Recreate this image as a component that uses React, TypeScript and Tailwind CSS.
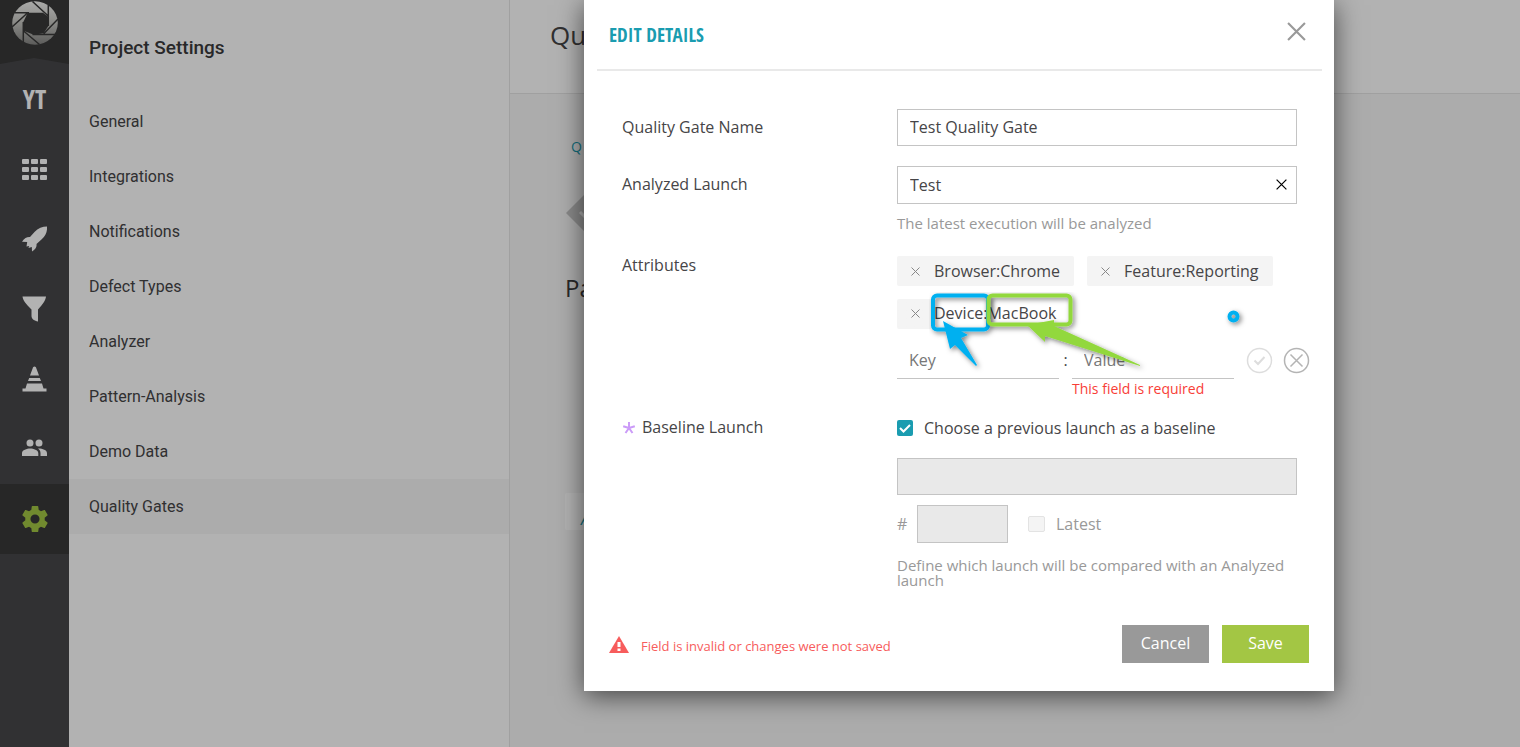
import React from "react";

const sideItems = [
  "General",
  "Integrations",
  "Notifications",
  "Defect Types",
  "Analyzer",
  "Pattern-Analysis",
  "Demo Data",
  "Quality Gates",
];

const icons: { name: string; drawing: React.ReactNode }[] = [
  {
    name: "Dashboards",
    drawing: (
      <g>
        {[3, 11, 19].map((y) =>
          [0, 9, 18].map((x) => (
            <rect key={`${x}-${y}`} x={x} y={y} width="7" height="5" rx="1" />
          )),
        )}
      </g>
    ),
  },
  {
    name: "Launches",
    drawing: (
      <path d="M25 .5C25.500 5.500 23.500 10 20 13L14.500 18C15 20.500 13.500 23.500 10 25.500L9.800 21L6.500 22L7.200 20L4.500 20.500L5.200 16L0 15.800C2.500 12 5 10.800 8 11L12.500 6C16 2.300 20.500.5 25 .5Z" />
    ),
  },
  { name: "Filters", drawing: <path d="M.5.5H24C23.500 4.500 21 8 16 13.500V25.500C12.500 25 9.500 23 9.500 20V13.500C4 8 1 4.500.5.5Z" /> },
  {
    name: "Debug",
    drawing: (
      <path d="M12.500 .5C13.500.5 14 1.300 14.300 2.200L17 9.500H8L10.700 2.200C11 1.300 11.500.5 12.500.5ZM7.200 12H17.800L19 15H6ZM5 17.500H20L21.500 22.500H24.500V25.500H.5V22.500H3.500Z" />
    ),
  },
  {
    name: "Members",
    drawing: (
      <path d="M8 3.500a3.500 3.500 0 1 1 0 7a3.500 3.500 0 0 1 0-7ZM17 3.500a3.500 3.500 0 1 1 0 7a3.500 3.500 0 0 1 0-7ZM0 20V17.200C0 14 5 12.500 8.200 12.500S16.300 14 16.300 17.200V20ZM16 12.600C20 12.400 25 14 25 17.200V20H18.500V17.200C18.500 15.200 17.600 13.700 16 12.600Z" />
    ),
  },
];

function Cross({ className, width = 1 }: { className: string; width?: number }) {
  return (
    <svg viewBox="0 0 18 18" className={className} fill="none" stroke="currentColor" strokeWidth={width} aria-hidden="true">
      <path d="M1 1L17 17M17 1L1 17" />
    </svg>
  );
}

function Logo() {
  return (
    <svg viewBox="0 0 46 46" className="size-[46px]" aria-hidden="true">
      <defs>
        <linearGradient id="steel" x1="0" y1="0" x2="0" y2="1">
          <stop offset="0" stopColor="#f4f4f2" />
          <stop offset=".5" stopColor="#c4c4c0" />
          <stop offset="1" stopColor="#858583" />
        </linearGradient>
      </defs>
      <ellipse cx="23" cy="23" rx="22.800" ry="21.700" fill="url(#steel)" />
      <path d="M15.700 12.700H31L36.300 16.700V26L31.700 33.300L21.700 34.700L11.700 30.700L11.300 22Z" fill="#383838" />
      <path
        d="M3 12.700H17M20.500 1.500L36.800 16.500M36.300 5V26M46 19L31.700 33.800M44 34.500H20.500M27.500 44.500L11.300 30.700M11.300 42V22M0 27L16 12.500"
        stroke="#383838"
        strokeWidth="1.500"
      />
    </svg>
  );
}

function Rail() {
  return (
    <nav aria-label="Main" className="flex w-[69px] shrink-0 flex-col bg-[#47474a]">
      <div className="flex h-16 flex-col items-center bg-[#383838]">
        <Logo />
        <svg viewBox="0 0 69 18" preserveAspectRatio="none" className="mt-auto h-[6px] w-full" aria-hidden="true">
          <path d="M0 18L34 0L69 18Z" fill="#47474a" />
        </svg>
      </div>
      <a href="#project" className="flex h-[70px] items-center justify-center font-['Open_Sans_Condensed','Open_Sans',sans-serif] text-[26px] font-bold text-white">
        YT
      </a>
      {icons.map((icon) => (
        <a key={icon.name} href={`#${icon.name}`} aria-label={icon.name} className="flex h-[70px] items-center justify-center">
          <svg viewBox="0 0 25 26" className="h-[26px] w-[25px] fill-white" aria-hidden="true">
            {icon.drawing}
          </svg>
        </a>
      ))}
      <a href="#settings" aria-label="Settings" className="flex h-[70px] items-center justify-center bg-[#383838]">
        <svg viewBox="2 2 20 20" className="size-[26px] fill-[#a3c644]" aria-hidden="true">
          <path d="M19.430 12.980c.04-.32.07-.64.07-.98s-.03-.66-.07-.98l2.110-1.650c.19-.15.24-.42.12-.64l-2-3.460c-.12-.22-.39-.3-.61-.22l-2.490 1c-.52-.4-1.080-.73-1.690-.98l-.38-2.650C14.460 2.180 14.250 2 14 2h-4c-.25 0-.46.18-.49.42l-.38 2.650c-.61.25-1.170.59-1.690.98l-2.490-1c-.23-.09-.49 0-.61.22l-2 3.460c-.13.22-.07.49.12.64l2.110 1.650c-.04.32-.07.65-.07.98s.03.66.07.98l-2.110 1.650c-.19.15-.24.42-.12.64l2 3.460c.12.22.39.3.61.22l2.490-1c.52.4 1.080.73 1.690.98l.38 2.650c.03.24.24.42.49.42h4c.25 0 .46-.18.49-.42l.38-2.650c.61-.25 1.170-.59 1.690-.98l2.490 1c.23.09.49 0 .61-.22l2-3.460c.12-.22.07-.49-.12-.64zM12 15.500A3.500 3.500 0 1 1 12 8.500a3.500 3.500 0 0 1 0 7z" />
        </svg>
      </a>
    </nav>
  );
}

function Chip({ children }: { children: React.ReactNode }) {
  return (
    <span className="flex h-[30px] items-center gap-3.5 rounded-xs bg-[#f4f4f4] px-3.5">
      <button type="button" aria-label="Remove" className="text-[#888]">
        <Cross className="size-[9px]" width={2} />
      </button>
      <span>{children}</span>
    </span>
  );
}

function Markers() {
  return (
    <svg viewBox="0 0 320 90" className="pointer-events-none absolute top-9 left-8 h-[90px] w-80" aria-hidden="true">
      <defs>
        <filter id="drop" filterUnits="userSpaceOnUse" x="-20" y="-20" width="360" height="130">
          <feDropShadow dx="2" dy="2" stdDeviation="2.500" floodOpacity=".5" />
        </filter>
      </defs>
      <g filter="url(#drop)">
        <rect x="4" y="3.500" width="55" height="34" rx="4" fill="none" stroke="#00b0f0" strokeWidth="4" />
        <path d="M14 29L39 43L32 46L48 73L47 74L26 53L21 57Z" fill="#00b0f0" />
      </g>
      <g filter="url(#drop)">
        <rect x="59.500" y="3.500" width="82" height="29" rx="4" fill="none" stroke="#92d83e" strokeWidth="4" />
        <path d="M98 33L125 28V34L211 73V74L116 44V50Z" fill="#92d83e" />
      </g>
      <circle cx="304.500" cy="24.500" r="4" fill="none" stroke="#00b0f0" strokeWidth="4" filter="url(#drop)" />
    </svg>
  );
}

const label = "w-[275px] shrink-0 leading-9";
const box = "block w-full border border-[#c4c4c4] px-3 text-base text-[#464547]";

function Modal() {
  return (
    <form role="dialog" aria-label="Edit details" className="w-[750px] bg-white px-[13px] pb-7 font-['Open_Sans',sans-serif] text-base text-[#464547] shadow-[0_5px_25px_rgba(0,0,0,0.6)]">
      <header className="-mr-px flex h-[71px] items-center justify-between border-b-2 border-[#e9e9e9] pr-4 pl-3">
        <h2 className="font-['Open_Sans_Condensed','Open_Sans',sans-serif] text-[19px] leading-6 font-bold text-[#1a9cb0] uppercase">Edit details</h2>
        <button type="button" aria-label="Close" className="pb-1.5 text-[#999]">
          <Cross className="size-[19px]" width={2} />
        </button>
      </header>
      <div className="flex flex-col pt-[38px] pr-6 pl-[25px]">
        <div className="flex">
          <label htmlFor="gate" className={label}>Quality Gate Name</label>
          <input id="gate" defaultValue="Test Quality Gate" className={`${box} h-[37px] pb-0.5`} />
        </div>
        <div className="mt-5 flex">
          <label htmlFor="launch" className={label}>Analyzed Launch</label>
          <div className="flex-1">
            <div className="relative">
              <input id="launch" defaultValue="Test" className={`${box} h-[38px]`} />
              <button type="button" aria-label="Clear" className="absolute top-[13px] right-2.5 text-black">
                <Cross className="size-[11px]" width={2} />
              </button>
            </div>
            <p className="mt-2 text-[15px] leading-[22px] text-[#999]">The latest execution will be analyzed</p>
          </div>
        </div>
        <div className="mt-[22px] flex">
          <span className="w-[275px] shrink-0 leading-[18px]">Attributes</span>
          <div className="relative flex-1">
            <div className="flex flex-wrap gap-[13px]">
              <Chip>Browser:Chrome</Chip>
              <Chip>Feature:Reporting</Chip>
              <span className="flex h-[30px] items-center rounded-xs bg-linear-to-r from-[#f4f4f4] from-[34px] to-white to-[34px] px-3.5 pb-0.5">
                <button type="button" aria-label="Remove" className="mr-3.5 text-[#888]">
                  <Cross className="size-[9px]" width={2} />
                </button>
                Device:MacBook
              </span>
            </div>
            <div className="mt-3 -mr-3 flex h-[38px] items-center">
              <input aria-label="Key" placeholder="Key" className="h-full w-[162px] border-b border-[#c4c4c4] px-3 placeholder:text-[#777]" />
              <span className="w-[13px] text-center">:</span>
              <input aria-label="Value" placeholder="Value" className="h-full w-[162px] border-b border-[#c4c4c4] px-3 placeholder:text-[#777]" />
              <button type="button" aria-label="Apply" className="ml-3 text-[#ddd]">
                <svg viewBox="0 0 27 27" className="size-[27px]" fill="none" stroke="currentColor" aria-hidden="true">
                  <circle cx="13.500" cy="13.500" r="12" strokeWidth="1.500" />
                  <path d="M8.500 13.500L12 17L18.500 10" strokeWidth="2" />
                </svg>
              </button>
              <button type="button" aria-label="Discard" className="ml-2.5 text-[#b4b4b4]">
                <svg viewBox="0 0 27 27" className="size-[27px]" fill="none" stroke="currentColor" strokeWidth="1.500" aria-hidden="true">
                  <circle cx="13.500" cy="13.500" r="12" />
                  <path d="M7.500 7.500L19.500 19.500M19.500 7.500L7.500 19.500" />
                </svg>
              </button>
            </div>
            <p className="ml-[175px] text-sm leading-5 text-[#f83e37]">This field is required</p>
            <Markers />
          </div>
        </div>
        <div className="mt-[18px] flex">
          <span className="flex w-[275px] shrink-0 gap-1.5 leading-5">
            <svg viewBox="0 0 14 14" className="mt-1 size-3.5" stroke="#cb9bf8" strokeWidth="2" aria-hidden="true">
              <path d="M7 7V1M7 7L1.200 5.200M7 7L12.800 5.200M7 7L3.500 12M7 7L10.500 12" />
            </svg>
            Baseline Launch
          </span>
          <div className="flex-1">
            <label className="flex items-center gap-[11px] leading-[22px]">
              <span className="relative flex size-4">
                <input type="checkbox" defaultChecked className="size-4 appearance-none rounded-xs bg-[#1a9cb0]" />
                <svg viewBox="0 0 16 16" className="pointer-events-none absolute inset-0 size-4" fill="none" stroke="white" strokeWidth="2" aria-hidden="true">
                  <path d="M3 8L6.500 11.500L13 5" />
                </svg>
              </span>
              Choose a previous launch as a baseline
            </label>
            <input aria-label="Baseline launch name" disabled className={`${box} mt-[19px] h-[37px] bg-[#e9e9e9]`} />
            <div className="mt-2.5 flex items-center text-[#999]">
              <label htmlFor="number" className="w-5">#</label>
              <input id="number" disabled className="h-[38px] w-[91px] border border-[#c4c4c4] bg-[#e9e9e9]" />
              <label className="ml-5 flex items-center gap-[11px]">
                <input type="checkbox" disabled className="h-4 w-[17px] appearance-none rounded-xs border border-[#e3e3e3] bg-[#f4f4f4]" />
                Latest
              </label>
            </div>
            <p className="mt-[15px] text-[15px] leading-[15px] text-[#999]">Define which launch will be compared with an Analyzed launch</p>
          </div>
        </div>
      </div>
      <footer className="mt-[37px] flex items-center gap-[13px] px-3">
        <p className="mt-1 mr-auto flex items-center gap-3 text-[13px] text-[#f75c5c]">
          <svg viewBox="0 0 20 17" className="mb-1 h-[17px] w-5" aria-hidden="true">
            <path d="M10 0L20 17H0Z" fill="#f75c5c" />
            <path d="M8.500 6H11.500V11H8.500ZM8.500 12.500H11.500V15H8.500Z" fill="white" />
          </svg>
          <span className="pt-0.5">Field is invalid or changes were not saved</span>
        </p>
        <button type="button" className="h-[38px] w-[87px] bg-[#999] pb-0.5 text-white">Cancel</button>
        <button type="submit" className="h-[38px] w-[87px] bg-[#a3c644] pb-0.5 text-white">Save</button>
      </footer>
    </form>
  );
}

export default function App() {
  return (
    <div className="relative flex min-h-screen overflow-hidden bg-white">
      <Rail />
      <aside className="w-[441px] shrink-0 border-r border-[#e6e6e6] font-[Roboto,sans-serif] text-base text-[#464547]">
        <h1 className="px-5 pt-9 text-[19px] leading-6 font-medium text-[#3a3a3c]">Project Settings</h1>
        <ul className="mt-[34px]">
          {sideItems.map((item) => (
            <li key={item}>
              <a href="#section" className={`flex h-[55px] items-center px-5 ${item === "Quality Gates" ? "bg-[#f7f7f7]" : ""}`}>
                {item}
              </a>
            </li>
          ))}
        </ul>
      </aside>
      <main className="flex-1 overflow-hidden bg-[#f7f7f7] font-['Open_Sans',sans-serif]">
        <header className="h-[94px] border-b border-[#e6e6e6] bg-white px-10 pt-4 text-[26px] leading-[38px] text-[#464547]">Qu</header>
        <div className="flex flex-col items-start px-[55px] pt-[43px]">
          <a href="#gates" className="ml-1.5 text-sm leading-5 text-[#1a9cb0]">Q</a>
          <svg viewBox="0 0 48 48" className="mt-8 size-12" aria-hidden="true">
            <path d="M1 24L24 1L47 24L24 47Z" fill="#c4c4c4" />
            <path d="M15 23L22 30L34 18" fill="none" stroke="#f4f4f4" strokeWidth="3" />
          </svg>
          <h2 className="mt-8 text-2xl leading-[38px] font-medium text-[#3a3a3c]">Pa</h2>
          <button type="button" className="mt-[186px] h-[37px] w-32 rounded-xs bg-white pt-3.5 pl-4 text-left text-[#1a9cb0] italic">
            A
          </button>
        </div>
      </main>
      <div className="absolute inset-0 flex items-start justify-end bg-black/30 pr-[186px]">
        <Modal />
      </div>
    </div>
  );
}
